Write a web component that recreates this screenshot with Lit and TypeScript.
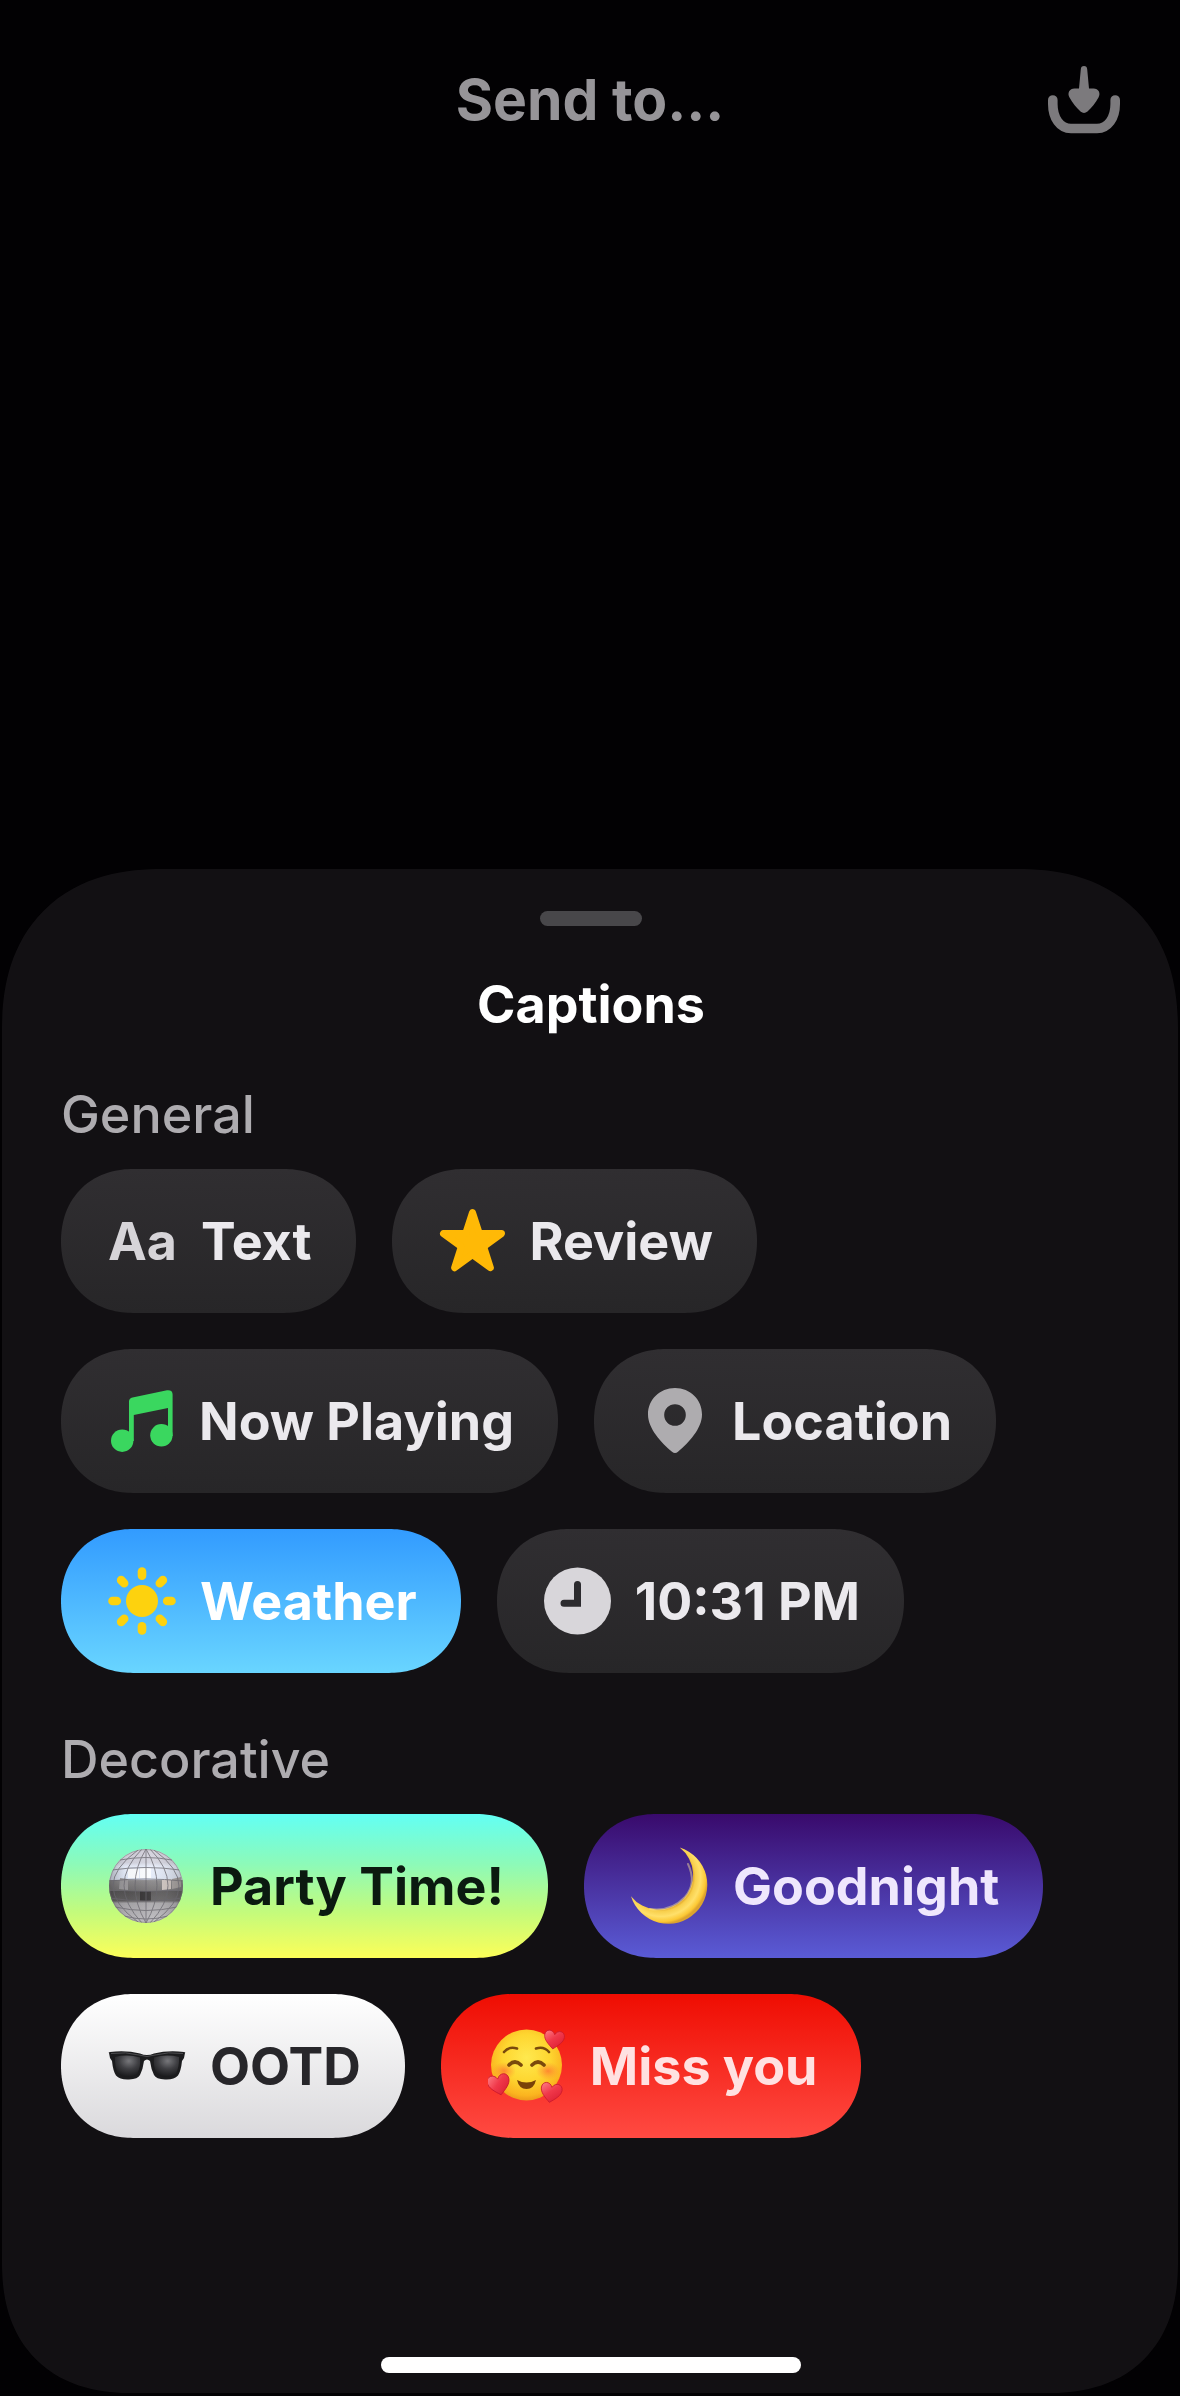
import { LitElement, html, svg, css, nothing, type TemplateResult } from "lit";
import { customElement, property } from "lit/decorators.js";

const downloadIcon = html`
  <svg class="glyph" width="72" height="68" viewBox="0 0 72 68" aria-hidden="true">
    <path d="M4.800 34V38C4.800 52 12 62.500 23 62.500H49C60 62.500 67.200 52 67.200 38V34"
      fill="none" stroke="#7c7a7d" stroke-width="9.600" stroke-linecap="round" />
    <path d="M36 0C38 0 39 1.200 39.200 3.200L41 22.500H45.500C50.500 22.500 53 27 50.500 31.500C47.500 37 43.500 42 39.500 45.500C37.200 47.400 34.800 47.400 32.500 45.500C28.500 42 24.500 37 21.500 31.500C19 27 21.500 22.500 26.500 22.500H31L32.800 3.200C33 1.200 34 0 36 0Z"
      fill="#7c7a7d" />
  </svg>`;

const starIcon = html`
  <svg width="67" height="66" viewBox="0 0 67 66" aria-hidden="true">
    <path d="M33.500 4.500L40.300 25.600H62.500L44.600 38.600L51.400 59.700L33.500 46.700L15.600 59.700L22.400 38.600L4.500 25.600H26.700Z"
      fill="#ffb906" stroke="#ffb906" stroke-width="7" stroke-linejoin="round" />
  </svg>`;

const musicIcon = html`
  <svg width="67" height="62" viewBox="-3 0 67 62" aria-hidden="true">
    <g fill="#3ad75f">
      <circle cx="11.200" cy="50.700" r="11.200" />
      <circle cx="50.400" cy="45.300" r="11.200" />
      <path d="M18 51V11.500Q18 8.300 21.500 7.500L56 .3Q61.600 -.3 61.600 4.500V46H57V18L22.800 25V51Z" />
    </g>
  </svg>`;

const pinIcon = html`
  <svg width="67" height="66" viewBox="-1 0 67 66" aria-hidden="true">
    <path fill-rule="evenodd" fill="#aeacaf"
      d="M33 0C48.300 0 60 11.600 60 26.500C60 40.500 46.500 55 36 63.800C34 65.400 32 65.400 30 63.800C19.500 55 6 40.500 6 26.500C6 11.600 17.700 0 33 0ZM33 16.200A10.800 10.800 0 1 0 33 37.800A10.800 10.800 0 1 0 33 16.200Z" />
  </svg>`;

const sunIcon = html`
  <svg width="68" height="68" viewBox="0 0 68 68" aria-hidden="true">
    <circle cx="34" cy="34" r="16" fill="#fdd20e" />
    <g stroke="#fdd20e" stroke-width="8.600" stroke-linecap="round">
      ${[0, 45, 90, 135, 180, 225, 270, 315].map(
        (angle) => svg`<path d="M34 4.500V8.800" transform="rotate(${angle} 34 34)" />`
      )}
    </g>
  </svg>`;

const clockIcon = html`
  <svg width="67" height="68" viewBox="0 0 67 68" aria-hidden="true">
    <circle cx="33.500" cy="34" r="33.500" fill="#d8d6da" />
    <path d="M33.500 17.500V36.200H20" fill="none" stroke="#2c2b2e" stroke-width="7" stroke-linecap="round" />
  </svg>`;

const discoIcon = html`
  <svg width="78" height="78" viewBox="0 0 78 78" aria-hidden="true">
    <defs>
      <linearGradient id="ball" x1="0" y1="0" x2="0" y2="1">
        <stop offset="0" stop-color="#cfccd6" />
        <stop offset=".2" stop-color="#d3d3df" />
        <stop offset=".25" stop-color="#e6ecfa" />
        <stop offset=".42" stop-color="#e0e8f8" />
        <stop offset=".43" stop-color="#858385" />
        <stop offset=".56" stop-color="#6e6c6d" />
        <stop offset=".57" stop-color="#4f4d4e" />
        <stop offset=".69" stop-color="#5b595a" />
        <stop offset=".72" stop-color="#a5a3a7" />
        <stop offset="1" stop-color="#bfbdc2" />
      </linearGradient>
      <linearGradient id="shade" x1="0" y1="0" x2="1" y2="0">
        <stop offset="0" stop-color="#3a383a" stop-opacity=".4" />
        <stop offset=".22" stop-color="#777" stop-opacity=".05" />
        <stop offset=".55" stop-color="#fff" stop-opacity=".1" />
        <stop offset="1" stop-color="#444" stop-opacity=".32" />
      </linearGradient>
      <clipPath id="sphere"><circle cx="38" cy="39" r="37" /></clipPath>
    </defs>
    <g clip-path="url(#sphere)">
      <rect width="78" height="78" fill="url(#ball)" />
      <path d="M32 21H43V31H32ZM20 22H31V31H20Z" fill="#fafcff" />
      <path d="M54 33L63 32V42L54 43Z" fill="#cfc4bf" />
      <path d="M64 32L73 30V40L64 42Z" fill="#a39d9b" />
      <path d="M32 44H43V54H32Z" fill="#2f2d2e" />
      <path d="M12 31L20 32V43L11 42Z" fill="#99979a" />
      <rect width="78" height="78" fill="url(#shade)" />
      <g fill="none" stroke="#69676e" stroke-width="1" opacity=".75">
        <path d="M12 13Q38 8 64 13M4 23Q38 18 72 23M1 34Q38 30 75 34M0 43Q38 46 76 43M2 51Q38 57 74 51M7 60Q38 67 69 60M16 69Q38 75 60 69" />
        <path d="M38 2V76M38 2Q16 38 38 76M38 2Q60 38 38 76M34 2Q-2 38 34 76M42 2Q78 38 42 76M30 3Q-20 39 30 75M46 3Q96 39 46 75" />
      </g>
    </g>
    <circle cx="38" cy="39" r="36.500" fill="none" stroke="#6c6a6d" stroke-opacity=".45" />
  </svg>`;

const moonIcon = html`
  <svg width="78" height="78" viewBox="0 0 78 78" aria-hidden="true">
    <defs>
      <radialGradient id="moon" gradientUnits="userSpaceOnUse" cx="30" cy="30" r="47">
        <stop offset=".66" stop-color="#d99a1f" />
        <stop offset=".73" stop-color="#f8cf4c" />
        <stop offset=".84" stop-color="#ffe06a" />
        <stop offset=".95" stop-color="#fcc834" />
        <stop offset="1" stop-color="#dca32e" />
      </radialGradient>
    </defs>
    <path d="M48.700 .5A39 39 0 1 1 0 49.200A34.700 34.700 0 1 0 48.700 .5Z" fill="url(#moon)" />
    <path d="M57 17Q66 36 54 50Q40 65 19 62" fill="none" stroke="#ffec96" stroke-width="2" stroke-linecap="round" opacity=".45" />
  </svg>`;

const glassesIcon = html`
  <svg width="78" height="30" viewBox="0 0 78 30" aria-hidden="true">
    <defs>
      <radialGradient id="lens" cx=".55" cy=".25" r=".75">
        <stop offset="0" stop-color="#77777b" />
        <stop offset=".5" stop-color="#3e3e42" />
        <stop offset="1" stop-color="#19191b" />
      </radialGradient>
    </defs>
    <path d="M1 2Q0 1 2 1Q18 -1 32 2.500Q39 5.500 46 2.500Q60 -1 76 1Q78 1 77 2L76 7L74 10Q73 20 70 24.500Q66 29 57 28.500Q48 28 46 24Q43 18 42 10Q39 7 36 10Q35 18 32 24Q30 28 21 28.500Q12 29 8 24.500Q5 20 4 10L2 7Z" fill="#1c1c1e" />
    <path d="M7 6Q20 3 32 6.500Q33 16 29 23Q26 26 20 26Q13 26 10 22.500Q6.500 15 7 6Z" fill="url(#lens)" />
    <path d="M46 6.500Q58 3 71 6Q71.500 15 68 22.500Q65 26 58 26Q52 26 49 23Q45 16 46 6.500Z" fill="url(#lens)" />
    <path d="M3 2.500Q18 .5 31 4Q39 7 47 4Q60 .5 75 2.500" fill="none" stroke="#4d4d50" />
  </svg>`;

const heart = (placement: string) => svg`
  <path transform=${placement} d="M0 10C-6 5 -11 1 -11 -4.500C-11 -11 -3 -12.500 0 -6C3 -12.500 11 -11 11 -4.500C11 1 6 5 0 10Z"
    fill="url(#heart)" stroke="#c8162b" stroke-width=".8" />`;

const loveIcon = html`
  <svg width="78" height="78" viewBox="0 0 78 78" aria-hidden="true">
    <defs>
      <radialGradient id="face" cx=".5" cy=".4" r=".6">
        <stop offset="0" stop-color="#ffe94f" />
        <stop offset=".55" stop-color="#fed630" />
        <stop offset=".88" stop-color="#fbb41f" />
        <stop offset="1" stop-color="#ee9a1b" />
      </radialGradient>
      <radialGradient id="blush">
        <stop offset="0" stop-color="#ff7030" stop-opacity=".75" />
        <stop offset="1" stop-color="#ff8a30" stop-opacity="0" />
      </radialGradient>
      <linearGradient id="heart" x1="0" y1="0" x2="1" y2="1">
        <stop offset="0" stop-color="#ff8088" />
        <stop offset=".45" stop-color="#f0384a" />
        <stop offset="1" stop-color="#d8182f" />
      </linearGradient>
    </defs>
    <circle cx="38.500" cy="38" r="35.500" fill="url(#face)" />
    <ellipse cx="16" cy="44" rx="12" ry="9" fill="url(#blush)" />
    <ellipse cx="60" cy="44" rx="12" ry="9" fill="url(#blush)" />
    <g fill="none" stroke="#7a4a0c" stroke-linecap="round">
      <path d="M16 25Q21 19 29 21.500M48 21.500Q56 19 61 25" stroke-width="2.600" />
      <path d="M21 38Q27 32 33 38M44 38Q50 32 56 38" stroke-width="3.600" />
    </g>
    <path d="M29 53Q38.500 58 48 53Q46 62 38.500 62Q31 62 29 53Z" fill="#7a4208" />
    ${heart("translate(66 13) rotate(8) scale(.9)")}
    ${heart("translate(11 58) rotate(-12)")}
    ${heart("translate(63 66) rotate(10) scale(.95)")}
  </svg>`;

interface Caption {
  label: string;
  icon?: TemplateResult;
  glyph?: string;
  tone?: string;
}

const general: Caption[] = [
  { label: "Text", glyph: "Aa" },
  { label: "Review", icon: starIcon },
  { label: "Now Playing", icon: musicIcon },
  { label: "Location", icon: pinIcon },
  { label: "Weather", icon: sunIcon, tone: "sky" },
  { label: "10:31 PM", icon: clockIcon },
];

const decorative: Caption[] = [
  { label: "Party Time!", icon: discoIcon, tone: "party" },
  { label: "Goodnight", icon: moonIcon, tone: "night" },
  { label: "OOTD", icon: glassesIcon, tone: "light" },
  { label: "Miss you", icon: loveIcon, tone: "love" },
];

@customElement("caption-chip")
export class CaptionChip extends LitElement {
  @property({ attribute: false }) caption!: Caption;

  static styles = css`
    :host {
      display: block;
    }
    .chip {
      display: flex;
      align-items: center;
      gap: 24px;
      height: 144px;
      padding: 0 44px 0 47px;
      border: 0;
      border-radius: 72px;
      corner-shape: superellipse(1.1);
      background: linear-gradient(#302e31, #272628);
      color: #ebe9ed;
      font: 650 52px/64px Inter, "Liberation Sans", sans-serif;
      white-space: nowrap;
      cursor: pointer;
    }
    .chip svg {
      display: block;
      flex: none;
    }
    .glyph,
    .label {
      padding-top: 2px;
    }
    .glyph {
      color: #d6d4d8;
    }
    .sky {
      background: linear-gradient(#329bff, #69d5ff);
      color: #fff;
    }
    .party {
      background: linear-gradient(#62fff4, #8dfab8 35%, #c3fb7c 68%, #fcfe58);
      color: #0b1a10;
    }
    .night {
      background: linear-gradient(#390a6c, #5a5bd6);
      color: #efe7fd;
    }
    .light {
      background: linear-gradient(#fff, #dad9dc);
      color: #27262a;
    }
    .love {
      background: linear-gradient(#ef0d02, #ff4a42);
      color: #ffe1e1;
    }
  `;

  render() {
    const { label, icon, glyph, tone } = this.caption;
    return html`
      <button class="chip ${tone ?? ""}" type="button">
        ${glyph ? html`<span class="glyph" aria-hidden="true">${glyph}</span>` : nothing}
        ${icon ?? nothing}
        <span class="label">${label}</span>
      </button>`;
  }
}

@customElement("app-root")
export class AppRoot extends LitElement {
  static styles = css`
    :host {
      display: flex;
      flex-direction: column;
      box-sizing: border-box;
      min-height: 100vh;
      padding: 0 2px 3px;
      background: #020103;
      color: #fff;
      font-family: Inter, "Liberation Sans", sans-serif;
    }
    .top {
      display: grid;
      grid-template-columns: 1fr auto 1fr;
      align-items: center;
      padding: 64px 58px 0;
    }
    .send {
      grid-column: 2;
      margin: 0;
      color: #969498;
      font-size: 57px;
      font-weight: 650;
      line-height: 72px;
    }
    .save {
      justify-self: end;
      padding: 0;
      border: 0;
      background: none;
      cursor: pointer;
    }
    .save svg {
      display: block;
    }
    .sheet {
      display: flex;
      flex-direction: column;
      margin-top: auto;
      padding: 42px 57px 20px 59px;
      border-radius: 137px 137px 115px 115px;
      background: #121013;
    }
    @supports (corner-shape: superellipse(1.2)) {
      .sheet {
        border-radius: 160px 160px 130px 130px;
        corner-shape: superellipse(1.2);
      }
    }
    .handle {
      align-self: center;
      width: 102px;
      height: 15px;
      border-radius: 8px;
      background: #48474a;
    }
    .title {
      margin: 47px 0 46px;
      font-size: 52px;
      font-weight: 650;
      line-height: 64px;
      text-align: center;
    }
    .group + .group {
      margin-top: 55px;
    }
    .name {
      margin: 0 0 22px;
      color: #aeacb0;
      font-size: 52px;
      font-weight: 550;
      line-height: 64px;
    }
    .chips {
      display: flex;
      flex-wrap: wrap;
      gap: 36px;
    }
    .home {
      align-self: center;
      width: 420px;
      height: 16px;
      margin-top: 219px;
      border-radius: 8px;
      background: #fff;
    }
  `;

  private group(name: string, captions: Caption[]) {
    return html`
      <section class="group">
        <h3 class="name">${name}</h3>
        <div class="chips">
          ${captions.map((caption) => html`<caption-chip .caption=${caption}></caption-chip>`)}
        </div>
      </section>`;
  }

  render() {
    return html`
      <header class="top">
        <h1 class="send">Send to...</h1>
        <button class="save" type="button" aria-label="Save">${downloadIcon}</button>
      </header>
      <main class="sheet">
        <div class="handle"></div>
        <h2 class="title">Captions</h2>
        ${this.group("General", general)}
        ${this.group("Decorative", decorative)}
        <div class="home"></div>
      </main>`;
  }
}
